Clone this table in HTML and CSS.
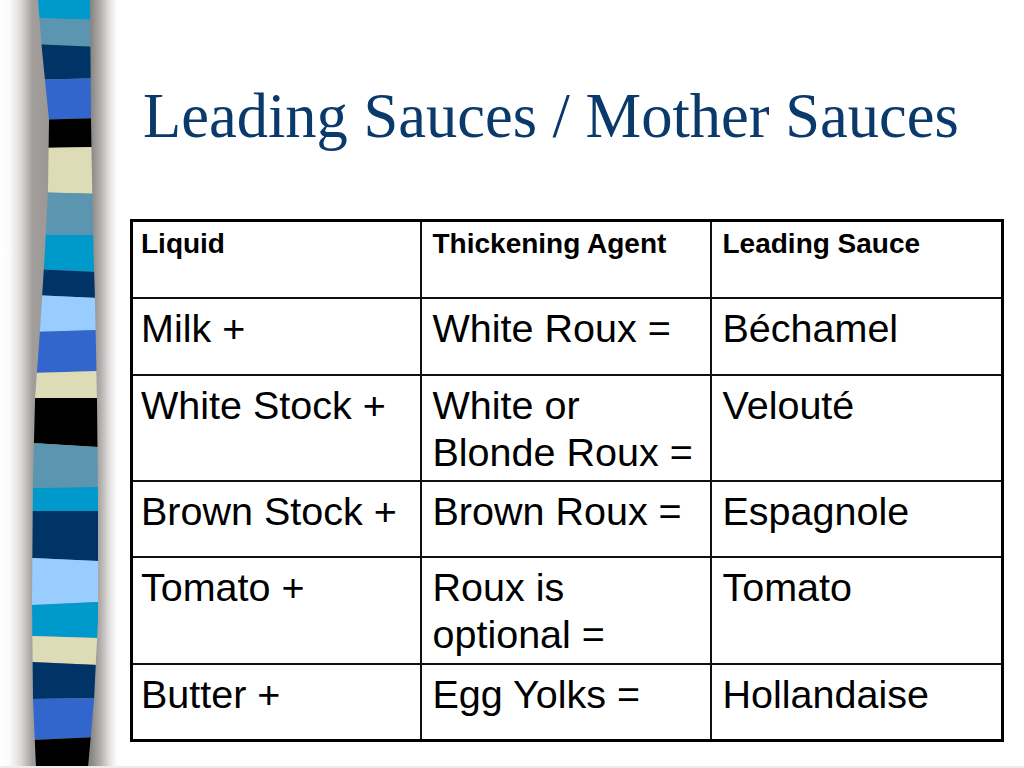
FILE: index.html
```html
<!DOCTYPE html>
<html lang="en">
<head>
<meta charset="utf-8">
<title>Leading Sauces / Mother Sauces</title>
<link rel="stylesheet" href="styles.css">
</head>
<body>
<div class="slide">
  <aside class="deco" aria-hidden="true">
    <svg width="120" height="768" viewBox="0 0 120 768" xmlns="http://www.w3.org/2000/svg">
      <defs>
        <linearGradient id="shade" x1="0" y1="0" x2="1" y2="0">
          <stop offset="0" stop-color="#ffffff"/>
          <stop offset="0.08" stop-color="#fbfbfb"/>
          <stop offset="0.17" stop-color="#dedcdb"/>
          <stop offset="0.27" stop-color="#a29e9c"/>
          <stop offset="0.76" stop-color="#8a8684"/>
          <stop offset="0.84" stop-color="#b3b0ae"/>
          <stop offset="0.91" stop-color="#e2e1e0"/>
          <stop offset="0.97" stop-color="#fcfcfc"/>
          <stop offset="1" stop-color="#ffffff"/>
        </linearGradient>
        <clipPath id="strip">
          <polygon points="38,0 42,50 49,120 48,190 45,250 40,330 35,400 33,480 32,600 33,700 36,768 88,768 94,700 98,620 98,500 97,400 95,300 93,235 91,120 90,0"/>
        </clipPath>
      </defs>
      <rect x="0" y="0" width="120" height="768" fill="url(#shade)"/>
      <g clip-path="url(#strip)">
        <polygon fill="#0099cc" points="30,0 100,0 100,20 30,18"/>
        <polygon fill="#5b95b0" points="30,18 100,20 100,47 30,44"/>
        <polygon fill="#003366" points="30,44 100,47 100,78 30,80"/>
        <polygon fill="#3366cc" points="30,80 100,78 100,118 30,120"/>
        <polygon fill="#000000" points="30,120 100,118 100,147 30,148"/>
        <polygon fill="#dddcb6" points="30,148 100,147 100,194 30,192"/>
        <polygon fill="#5b95b0" points="30,192 100,194 100,235 30,235"/>
        <polygon fill="#0099cc" points="30,235 100,235 100,272 30,269"/>
        <polygon fill="#003366" points="30,269 100,272 100,298 30,295"/>
        <polygon fill="#99ccff" points="30,295 100,298 100,330 30,332"/>
        <polygon fill="#3366cc" points="30,332 100,330 100,371 30,373"/>
        <polygon fill="#dddcb6" points="30,373 100,371 100,398 30,398"/>
        <polygon fill="#000000" points="30,398 100,398 100,447 30,443"/>
        <polygon fill="#5b95b0" points="30,443 100,447 100,487 30,488"/>
        <polygon fill="#0099cc" points="30,488 100,487 100,511 30,511"/>
        <polygon fill="#003366" points="30,511 100,511 100,561 30,558"/>
        <polygon fill="#99ccff" points="30,558 100,561 100,602 30,605"/>
        <polygon fill="#0099cc" points="30,605 100,602 100,638 30,636"/>
        <polygon fill="#dddcb6" points="30,636 100,638 100,665 30,662"/>
        <polygon fill="#003366" points="30,662 100,665 100,698 30,699"/>
        <polygon fill="#3366cc" points="30,699 100,698 100,737 30,740"/>
        <polygon fill="#000000" points="30,740 100,737 100,768 30,768"/>
      </g>
    </svg>
  </aside>
  <main class="content">
    <h1 class="title">Leading Sauces / Mother Sauces</h1>
    <table class="sauces">
      <colgroup><col class="c1"><col class="c2"><col class="c3"></colgroup>
      <thead>
        <tr class="r-head">
          <th>Liquid</th>
          <th>Thickening Agent</th>
          <th>Leading Sauce</th>
        </tr>
      </thead>
      <tbody>
        <tr class="r-one"><td>Milk +</td><td>White Roux =</td><td>Béchamel</td></tr>
        <tr class="r-two"><td>White Stock +</td><td>White or Blonde Roux =</td><td>Velouté</td></tr>
        <tr class="r-one b"><td>Brown Stock +</td><td>Brown Roux =</td><td>Espagnole</td></tr>
        <tr class="r-two t"><td>Tomato +</td><td>Roux is optional =</td><td>Tomato</td></tr>
        <tr class="r-one"><td>Butter +</td><td>Egg Yolks =</td><td>Hollandaise</td></tr>
      </tbody>
    </table>
  </main>
</div>
</body>
</html>
```

FILE: styles.css
```css
html, body {
  margin: 0;
  padding: 0;
  background: #ffffff;
}

.slide {
  width: 1024px;
  height: 768px;
  display: flex;
  overflow: hidden;
  border-bottom: 2px solid #ececec;
  box-sizing: border-box;
}

.deco {
  flex: 0 0 120px;
  height: 768px;
}

.deco svg {
  display: block;
}

.content {
  flex: 1 1 auto;
  padding-left: 10px;
  display: flex;
  flex-direction: column;
}

.title {
  margin: 80px 0 0 0;
  padding-left: 13px;
  font-family: "Liberation Serif", "Times New Roman", serif;
  font-weight: normal;
  font-size: 62.5px;
  line-height: 72px;
  color: #0a3a6b;
  white-space: nowrap;
}

.sauces {
  margin-top: 67px;
  width: 871px;
  table-layout: fixed;
  border-collapse: collapse;
  border: 3px solid #000;
  font-family: "Liberation Sans", Arial, sans-serif;
  color: #000;
}

.sauces col.c1 { width: 289px; }
.sauces col.c2 { width: 290px; }
.sauces col.c3 { width: 292px; }

.sauces th,
.sauces td {
  border: 2px solid #111;
  padding: 6px 9px 0 11px;
  vertical-align: top;
  text-align: left;
}

.sauces th:first-child,
.sauces td:first-child {
  padding-left: 8px;
}

.sauces th {
  font-weight: bold;
  font-size: 28px;
  line-height: 32px;
}

.sauces td {
  font-size: 39.5px;
  line-height: 47px;
}

.sauces tr.r-head { height: 77px; }
.sauces tr.r-one { height: 77px; }
.sauces tr.r-two { height: 106px; }
.sauces tr.b { height: 76px; }
.sauces tr.t { height: 107px; }
```
